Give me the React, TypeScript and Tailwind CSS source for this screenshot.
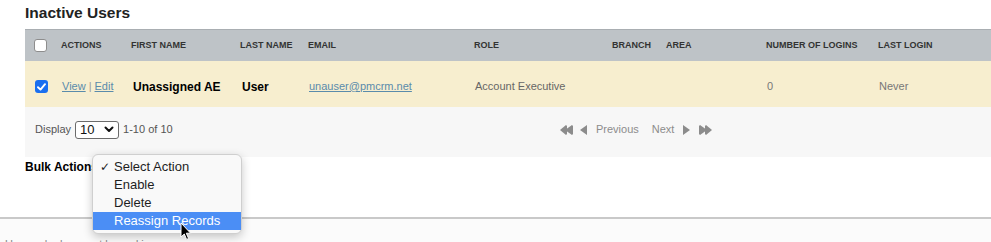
import React from "react";

const cols =
  "grid grid-cols-[36px_70px_109px_68px_166px_138px_54px_100px_112px_1fr]";

function TriLeft() {
  return (
    <svg width="7" height="10" viewBox="0 0 7 10">
      <polygon points="0,5 7,0 7,10" fill="#8c8c8c" />
    </svg>
  );
}
function TriRight() {
  return (
    <svg width="7" height="10" viewBox="0 0 7 10">
      <polygon points="7,5 0,0 0,10" fill="#8c8c8c" />
    </svg>
  );
}
function DoubleLeft() {
  return (
    <svg width="13" height="10" viewBox="0 0 13 10">
      <polygon points="0,5 6,0 7,1 7,9 6,10" fill="#8c8c8c" />
      <polygon points="5,5 12,0 13,1 13,9 12,10" fill="#8c8c8c" />
    </svg>
  );
}
function DoubleRight() {
  return (
    <svg width="13" height="10" viewBox="0 0 13 10">
      <polygon points="13,5 7,0 6,1 6,9 7,10" fill="#8c8c8c" />
      <polygon points="8,5 1,0 0,1 0,9 1,10" fill="#8c8c8c" />
    </svg>
  );
}

export default function App() {
  return (
    <div className="relative w-[991px] h-[242px] overflow-hidden bg-white font-['Liberation_Sans',Arial,sans-serif] text-[#222]">
      <div className="pl-[25px]">
        <h2 className="h-[29px] pt-[4px] text-[15.5px] leading-[18px] font-bold text-[#222]">
          Inactive Users
        </h2>
        {/* header */}
        <div
          className={`${cols} h-[32px] items-center bg-[#bec3c7] border-t border-[#a9aeb2] text-[9px] font-bold uppercase text-[#333] leading-none`}
        >
          <div className="pl-[9px] flex items-center">
            <div className="w-[13px] h-[13px] rounded-[3px] bg-white border border-[#8d8d8d]" />
          </div>
          <div>Actions</div>
          <div>First Name</div>
          <div>Last Name</div>
          <div>Email</div>
          <div>Role</div>
          <div>Branch</div>
          <div>Area</div>
          <div>Number of Logins</div>
          <div>Last Login</div>
        </div>
        {/* data row */}
        <div
          className={`${cols} h-[46px] pt-[5px] items-center bg-[#f7eecf] text-[11px] leading-none`}
        >
          <div className="pl-[10px] flex items-center">
            <div className="w-[13px] h-[13px] rounded-[3px] bg-[#1a6ff0] flex items-center justify-center">
              <svg width="9" height="8" viewBox="0 0 9 8">
                <path
                  d="M1 4.2 L3.5 6.6 L8 1.2"
                  stroke="white"
                  strokeWidth="1.9"
                  fill="none"
                  strokeLinecap="round"
                  strokeLinejoin="round"
                />
              </svg>
            </div>
          </div>
          <div className="pl-[1px] text-[#5a8bab]">
            <span className="underline">View</span>
            <span className="text-[#999] mx-[3px]">|</span>
            <span className="underline">Edit</span>
          </div>
          <div className="pl-[2px] text-[12px] font-bold text-black">Unassigned AE</div>
          <div className="pl-[2px] text-[12px] font-bold text-black">User</div>
          <div className="pl-[1px] text-[#5a8bab] underline">unauser@pmcrm.net</div>
          <div className="pl-[1px] text-[#666]">Account Executive</div>
          <div />
          <div />
          <div className="pl-[1px] text-[#777]">0</div>
          <div className="pl-[1px] text-[#777]">Never</div>
        </div>
        {/* footer */}
        <div className="h-[50px] pb-[5px] bg-[#f7f7f7] flex items-center pl-[10px] text-[11px] text-[#555]">
          <div className="w-[525px] flex items-center">
            <span>Display</span>
            <div className="ml-[4px] w-[44px] h-[18px] border border-[#6b6b6b] rounded-[3px] bg-white flex items-center justify-between pl-[4px] pr-[4px]">
              <span className="text-[13px] text-[#111] leading-none">10</span>
              <svg width="10" height="7" viewBox="0 0 10 7">
                <path
                  d="M1.5 1.5 L5 5 L8.5 1.5"
                  stroke="#111"
                  strokeWidth="2"
                  fill="none"
                  strokeLinecap="round"
                  strokeLinejoin="round"
                />
              </svg>
            </div>
            <span className="ml-[4px]">1-10 of 10</span>
          </div>
          <div className="flex items-center text-[#8c8c8c]">
            <DoubleLeft />
            <span className="ml-[7px]">
              <TriLeft />
            </span>
            <span className="ml-[9px]">Previous</span>
            <span className="ml-[13px]">Next</span>
            <span className="ml-[9px]">
              <TriRight />
            </span>
            <span className="ml-[9px]">
              <DoubleRight />
            </span>
          </div>
        </div>
        {/* bulk actions */}
        <div className="h-[60px] pt-[3px] text-[12px] leading-[14px] font-bold text-black">
          Bulk Actions:
        </div>
      </div>
      <div className="h-[2px] bg-[#c9c9c9]" />
      <div className="h-[23px] bg-[#fbfbfb] pl-[5px] pt-[19px] text-[11px] leading-[13px] text-[#888]">
        Users who have not logged in
      </div>

      {/* open dropdown menu */}
      <div className="absolute left-[92px] top-[154px] w-[150px] h-[80px] rounded-[6px] border border-[#cfcfcf] bg-[#f9f9f9] shadow-[0_3px_10px_rgba(0,0,0,0.22)] py-[3px] text-[13px] leading-[18px] text-[#1e1e1e]">
        <div className="relative h-[18px] pl-[21px]">
          <span className="absolute left-[7px] top-0 font-['DejaVu_Sans',sans-serif] text-[12px]">✓</span>
          Select Action
        </div>
        <div className="h-[18px] pl-[21px]">Enable</div>
        <div className="h-[18px] pl-[21px]">Delete</div>
        <div className="h-[18px] pl-[21px] bg-[#4b8ef5] text-white">Reassign Records</div>
      </div>

      {/* mouse cursor */}
      <svg
        className="absolute left-[180px] top-[222px]"
        width="12"
        height="19"
        viewBox="0 0 12 19"
      >
        <path
          d="M1 1 L1 15 L4.3 12 L6.6 17.4 L8.6 16.5 L6.3 11.2 L10.6 11.2 Z"
          fill="black"
          stroke="white"
          strokeWidth="1"
          strokeLinejoin="round"
        />
      </svg>
    </div>
  );
}
